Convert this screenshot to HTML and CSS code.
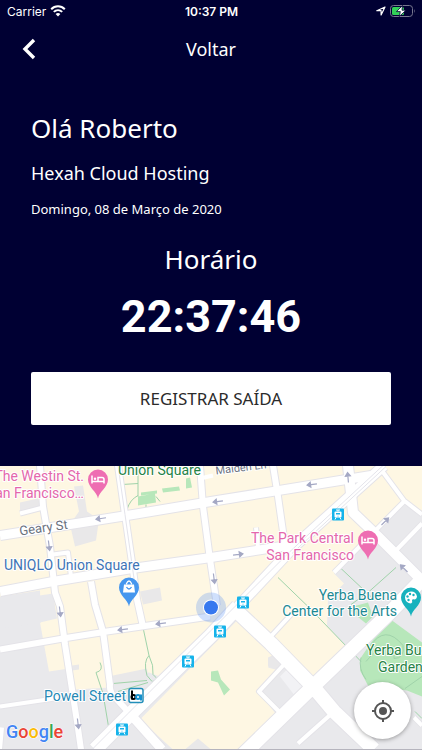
FILE: index.html
```html
<!DOCTYPE html>
<html lang="pt-BR">
<head>
  <meta charset="utf-8">
  <meta name="viewport" content="width=device-width, initial-scale=1">
  <title>Registrar ponto</title>
  <link rel="stylesheet" href="styles.css">
</head>
<body>
  <div class="status-bar">
    <div class="status-left">
      <span>Carrier</span>
      <svg width="16" height="12" viewBox="0 0 16 12" fill="none" stroke="#fff" stroke-width="2">
        <path d="M1.200 4.200C5 .3 11 .3 14.800 4.200M3.800 6.900C6.200 4.600 9.800 4.600 12.200 6.900"/>
        <path d="M8 11.500L5.600 9Q8 7 10.400 9Z" fill="#fff" stroke="none"/>
      </svg>
    </div>
    <span class="status-time">10:37 PM</span>
    <div class="status-right">
      <svg width="10" height="10" viewBox="0 0 10 10" fill="none" stroke="#fff" stroke-width="1.200" stroke-linejoin="round">
        <path d="M9 1L.8 4.700H5.100V9Z"/>
      </svg>
      <svg width="26" height="12" viewBox="0 0 26 12">
        <rect x=".5" y=".5" width="22" height="11" rx="3" fill="none" stroke="#77778f"/>
        <path d="M24 4Q25.500 6 24 8Z" fill="#77778f"/>
        <rect x="2" y="2" width="12" height="8" rx="1.500" fill="#32d158"/>
        <path d="M12.500 .5L6.500 6.600H10.300L9.300 11.500L16 5.200H12Z" fill="#fff" stroke="#000033" stroke-width=".8"/>
      </svg>
    </div>
  </div>

  <nav class="navbar">
    <button class="back" type="button" aria-label="Voltar">
      <svg width="14" height="22" viewBox="0 0 14 22" fill="none" stroke="#fff" stroke-width="3.400">
        <path d="M12 2L3 11L12 20"/>
      </svg>
    </button>
    <span class="navbar-title">Voltar</span>
  </nav>

  <main class="panel">
    <h1 class="greeting">Olá Roberto</h1>
    <p class="company">Hexah Cloud Hosting</p>
    <p class="date">Domingo, 08 de Março de 2020</p>
    <h2 class="clock-title">Horário</h2>
    <time class="clock">22:37:46</time>
    <button class="register" type="button">REGISTRAR SAÍDA</button>
  </main>

  <section class="map">
    <svg class="map-canvas" viewBox="0 0 422 284" preserveAspectRatio="xMidYMid slice">
      <defs>
        <path id="arrow" d="M-5 0H5M-5 0L-1.500 -2.500V2.500Z"/>
        <g id="tram">
          <rect x="-6" y="-6" width="12" height="12" rx="1" fill="#16b3ea"/>
          <path d="M-2 -4.500H2M0 -4.500V-3" stroke="#fff"/>
          <rect x="-3.500" y="-3" width="7" height="6" rx="1" fill="#fff"/>
          <path d="M-2 -1.500H2V0H-2ZM-.5 1.200H.5V2H-.5Z" fill="#16b3ea"/>
          <path d="M-2 3L-3 5M2 3L3 5" stroke="#fff"/>
        </g>
        <path id="pin" d="M0 19C-1 12 -10 8 -10 0A10 10 0 0 1 10 0C10 8 1 12 0 19Z"/>
        <g id="bed" fill="none" stroke="#fff" stroke-width="1.500">
          <path d="M-6 -4V4M-6 2H6M6 4V0Q6 -2 4 -2H0V2"/>
          <circle cx="-3" cy="-.8" r="1.200" fill="#fff" stroke="none"/>
        </g>
      </defs>

      <rect width="422" height="284" fill="#e9e9ec"/>

      <!-- commercial blocks -->
      <g fill="#fef7e3">
        <path d="M0 0H384L211 172L165 213L149 207L113 211L110 222L74 224L69 203L49 206L40 157L57 153L53 128L0 136Z"/>
        <path d="M384 0H422V47L404 35L372 68L334 108L344 118L328 134L327 160L346 181L313 213L241 148L294 80Z"/>
        <path d="M238 154L268 180L279 191L268 202L279 205L258 226L278 251L244 284H173L140 254Z"/>
      </g>
      <path d="M0 131L40 125L41 157L0 163Z" fill="#e9e9ec"/>

      <!-- buildings -->
      <g fill="#e9e8e9">
        <path d="M20 37L38 33L42 44L20 48ZM74 21L83 20L87 46L99 54L96 75L75 81L70 59L79 46ZM140 126L160 122L162 135L143 139Z"/>
        <path d="M72 200L79 199V204L72 205ZM113 210L147 203L148 214L114 220ZM185 284L198 273L211 284Z"/>
        <path d="M268 192L279 187L286 198L279 205L268 201Z"/>
      </g>
      <path d="M280 211L288 203L307 224L297 233Z" fill="#f2f2f5"/>

      <!-- parks -->
      <g fill="#b7e7ba">
        <path d="M138 31L155 28L156 37L138 40ZM141 27L157 25V28L141 30ZM162 23L179 21L180 25L163 27ZM186 13L190 12L192 22L186 23Z"/>
        <path d="M211 206L218 205L221 214L230 224L224 230L218 217L211 215Z"/>
        <path d="M353 141L368 137L373 151L366 158L350 145Z"/>
        <path d="M361 192L388 152L422 177V231L407 225L368 220L360 205Z"/>
      </g>
      <g fill="none" stroke="#a0d3aa">
        <path d="M138 0V31M138 30Q130 34 127 44M122 19L138 18M156 31L160 36M146 39V42"/>
        <path d="M278 112L308 141L361 196M341 103L374 134M396 102L368 127L351 139"/>
        <path d="M143 162L149 190Q143 196 147 210L152 216L164 212M149 190Q154 200 153 209L158 214"/>
        <path d="M100 197Q104 205 96 207L103 228L109 264L140 231M113 218L147 215M118 226L148 217"/>
        <path d="M361 192Q358 203 366 214M370 181Q385 158 403 180Q405 193 394 193V184M373 188L366 196M405 223L422 211M415 246L422 253"/>
      </g>

      <!-- streets: edge stroke first, white on top -->
      <g fill="none" stroke="#e4e3e8" stroke-linejoin="round">
        <g stroke-width="6">
          <path d="M20 48L43 42M53 89L68 87L71 111M256 62L258 82M381 4L404 35L422 49M334 107L404 36M394 87L422 58"/>
          <path d="M268 174L291 149M284 199L259 226L281 248M334 246L298 278M0 241L68 231M2 262L0 284M414 252L422 260"/>
        </g>
        <g stroke-width="8">
          <path d="M40 0L43 41L50 81L55 127L60 141L65 179L77 256L81 284M118 0L125 49L132 97L137 134L143 161M200 0L203 41L210 94L217 140M273 0L278 31L285 80"/>
          <path d="M91 116L95 139L103 166L110 219Q109 227 116 233L128 246M0 184L63 173L107 166L210 151"/>
        </g>
        <path d="M0 70L127 50L211 36L371 10M0 126L53 116L132 103L211 92L294 79M128 246L162 284" stroke-width="11"/>
        <path d="M348 0L353 47L378 71L422 115" stroke-width="12"/>
        <path d="M384 0L294 81L238 141" stroke-width="12"/>
        <path d="M238 141L211 170L133 246L95 284M236 145L271 178L313 221L334 246L374 284M241 291L313 221L391 146L422 114" stroke-width="16"/>
      </g>
      <g fill="none" stroke="#fff" stroke-linejoin="round">
        <g stroke-width="4">
          <path d="M20 48L43 42M53 89L68 87L71 111M256 62L258 82M381 4L404 35L422 49M334 107L404 36M394 87L422 58"/>
          <path d="M268 174L291 149M284 199L259 226L281 248M334 246L298 278M0 241L68 231M2 262L0 284M414 252L422 260"/>
        </g>
        <g stroke-width="6">
          <path d="M40 0L43 41L50 81L55 127L60 141L65 179L77 256L81 284M118 0L125 49L132 97L137 134L143 161M200 0L203 41L210 94L217 140M273 0L278 31L285 80"/>
          <path d="M91 116L95 139L103 166L110 219Q109 227 116 233L128 246M0 184L63 173L107 166L210 151"/>
        </g>
        <path d="M200 13L213 10" stroke-width="4"/>
        <path d="M0 70L127 50L211 36L371 10M0 126L53 116L132 103L211 92L294 79M128 246L162 284" stroke-width="9"/>
        <path d="M348 0L353 47L378 71L422 115" stroke-width="10"/>
        <path d="M384 0L294 81L238 141" stroke-width="10"/>
        <path d="M238 141L211 170L133 246L95 284M236 145L271 178L313 221L334 246L374 284M241 291L313 221L391 146L422 114" stroke-width="14"/>
      </g>
      <path d="M383 0L290 86L128 248L92 284M118 0L125 49L135 120M386 1L292 88" fill="none" stroke="#e4e4eb"/>

      <!-- one-way arrows -->
      <g fill="#a4a8c4" stroke="#a4a8c4" stroke-width="1.200">
        <use href="#arrow" transform="translate(101 53) rotate(-9)"/>
        <use href="#arrow" transform="translate(49 80) rotate(-97)"/>
        <use href="#arrow" transform="translate(218 36) rotate(-8)"/>
        <use href="#arrow" transform="translate(312 19) rotate(-8)"/>
        <use href="#arrow" transform="translate(348 12) rotate(85)"/>
        <use href="#arrow" transform="translate(238 89) rotate(172)"/>
        <use href="#arrow" transform="translate(214 113) rotate(-97)"/>
        <use href="#arrow" transform="translate(385 56) rotate(135)"/>
        <use href="#arrow" transform="translate(404 103) rotate(45)"/>
        <use href="#arrow" transform="translate(60 146) rotate(-97)"/>
        <use href="#arrow" transform="translate(123 164) rotate(-8)"/>
        <use href="#arrow" transform="translate(161 158) rotate(-8)"/>
        <use href="#arrow" transform="translate(78 258) rotate(-97)"/>
      </g>

      <!-- transit stops -->
      <use href="#tram" x="338" y="49"/>
      <use href="#tram" x="243" y="137"/>
      <use href="#tram" x="220" y="166"/>
      <use href="#tram" x="188" y="196"/>
      <use href="#tram" x="122" y="264"/>
      <rect x="129" y="223" width="14" height="14" rx="2" fill="#fff" stroke="#238fba" stroke-width="1.500"/>
      <g fill="none" stroke-width="2">
        <path d="M132 225V234" stroke="#000"/>
        <circle cx="133.500" cy="231.500" r="2" stroke="#000"/>
        <circle cx="138" cy="231.500" r="2" stroke="#168fcc"/>
        <path d="M141 229V235" stroke="#168fcc"/>
      </g>

      <!-- places -->
      <g fill="#ee6eb2">
        <use href="#pin" x="98" y="14"/>
        <use href="#pin" x="368" y="75"/>
      </g>
      <use href="#bed" x="98" y="14"/>
      <use href="#bed" x="368" y="75"/>
      <use href="#pin" x="129" y="122" fill="#4596ee"/>
      <path d="M124 119H134L135 127H123Z" fill="#fff"/>
      <path d="M126.500 119V118Q129 113 131.500 118V119" fill="none" stroke="#fff" stroke-width="1.300"/>
      <path d="M126.500 121.500Q129 125.500 131.500 121.500" fill="none" stroke="#4596ee" stroke-width="1.300"/>
      <use href="#pin" x="411" y="132" fill="#18b2bd"/>
      <path d="M411 126A6 6 0 1 0 411 138Q413 137 412 135Q412 133 415 134Q417 133 417 131Q416 126 411 126Z" fill="#fff"/>
      <g fill="#18b2bd">
        <circle cx="407.500" cy="131" r="1.200"/>
        <circle cx="410" cy="128.500" r="1.200"/>
        <circle cx="413.500" cy="129.500" r="1.200"/>
        <circle cx="408.500" cy="134.500" r="1.200"/>
      </g>

      <!-- current position -->
      <circle cx="211" cy="142" r="15" fill="#4285f4" fill-opacity=".25"/>
      <circle cx="211" cy="142" r="8" fill="#fff"/>
      <circle cx="211" cy="142" r="7" fill="#3678ef"/>

      <g class="label">
        <g class="hotel">
          <text x="84" y="15" text-anchor="end">The Westin St.</text>
          <text x="84" y="32" text-anchor="end">San Francisco…</text>
          <text x="354" y="77" text-anchor="end">The Park Central</text>
          <text x="354" y="94" text-anchor="end">San Francisco</text>
        </g>
        <g class="park">
          <text x="118" y="9">Union Square</text>
          <text x="366" y="189">Yerba Buena</text>
          <text x="378" y="206">Gardens</text>
        </g>
        <text class="shop" x="4" y="104">UNIQLO Union Square</text>
        <text class="arts" x="397" y="134" text-anchor="end">Yerba Buena</text>
        <text class="arts" x="397" y="150" text-anchor="end">Center for the Arts</text>
        <text class="station" x="126" y="235" text-anchor="end">Powell Street</text>
        <text class="street" transform="translate(20 70) rotate(-8)">Geary St</text>
        <text class="street small" transform="translate(216 9) rotate(-7)">Maiden Ln</text>
      </g>
      <text class="google" x="6" y="272"><tspan fill="#4285f4">G</tspan><tspan fill="#ea4335">o</tspan><tspan fill="#fbbc05">o</tspan><tspan fill="#4285f4">g</tspan><tspan fill="#34a853">l</tspan><tspan fill="#ea4335">e</tspan></text>
    </svg>

    <button class="locate" type="button" aria-label="Minha localização">
      <svg width="24" height="24" viewBox="0 0 24 24" fill="none" stroke="#555" stroke-width="2">
        <circle cx="12" cy="12" r="8"/>
        <circle cx="12" cy="12" r="4" fill="#555" stroke="none"/>
        <path d="M12 1V4M12 20V23M1 12H4M20 12H23"/>
      </svg>
    </button>
  </section>
</body>
</html>
```
FILE: styles.css
```css
* {
  box-sizing: border-box;
}

body {
  margin: 0;
  min-height: 100vh;
  display: flex;
  flex-direction: column;
  background-color: #000033;
  color: #fff;
  font-family: "Noto Sans", sans-serif;
}

button {
  border: 0;
  padding: 0;
  font-family: inherit;
  cursor: pointer;
}

svg {
  display: block;
}

.status-bar {
  height: 22px;
  padding: 0 6px 0 7px;
  display: grid;
  grid-template-columns: 1fr auto 1fr;
  align-items: center;
  font-family: Inter, sans-serif;
  font-size: 12px;
}

.status-left,
.status-right {
  display: flex;
  align-items: center;
  gap: 4px;
}

.status-right {
  justify-content: flex-end;
}

.status-time {
  font-weight: 600;
}

.navbar {
  height: 54px;
  padding: 0 22px;
  display: grid;
  grid-template-columns: 1fr auto 1fr;
  align-items: center;
}

.back {
  width: 14px;
  background: none;
}

.navbar-title {
  font-size: 18px;
}

.panel {
  padding: 34px 31px 41px;
  display: flex;
  flex-direction: column;
}

.greeting,
.company,
.date,
.clock-title {
  margin: 0;
  font-weight: 400;
}

.greeting,
.clock-title {
  font-size: 26px;
  line-height: 36px;
}

.company {
  margin-top: 15px;
  font-size: 18px;
  line-height: 24px;
}

.date {
  margin-top: 14px;
  font-size: 13px;
  line-height: 20px;
}

.clock-title {
  margin-top: 22px;
  text-align: center;
}

.clock {
  margin-top: 16px;
  font-family: Roboto, sans-serif;
  font-size: 45px;
  font-weight: 700;
  line-height: 48px;
  text-align: center;
}

.register {
  height: 53px;
  margin-top: 31px;
  border-radius: 2px;
  background-color: #fff;
  color: #2b2b2b;
  font-size: 17px;
}

.map {
  flex: 1;
  min-height: 284px;
  position: relative;
  overflow: hidden;
  border-bottom: 1px solid #b5b4bd;
}

.map-canvas {
  position: absolute;
  width: 100%;
  height: 100%;
}

.label {
  font-family: Roboto, sans-serif;
  font-size: 14px;
  paint-order: stroke;
  stroke: #fff;
  stroke-width: 2px;
  stroke-linejoin: round;
}

.hotel {
  fill: #e467ab;
}

.park {
  fill: #268345;
}

.shop {
  fill: #3e74b5;
}

.arts {
  fill: #1b8992;
}

.station {
  fill: #2588b5;
}

.street {
  fill: #6b7280;
  font-size: 13px;
}

.small {
  font-size: 11px;
}

.google {
  font-family: Roboto, sans-serif;
  font-size: 18px;
  font-weight: 500;
  paint-order: stroke;
  stroke: #fff;
  stroke-width: 1px;
}

.locate {
  position: absolute;
  right: 11px;
  bottom: 10px;
  width: 57px;
  height: 57px;
  display: grid;
  place-items: center;
  border-radius: 50%;
  background-color: #fff;
  box-shadow: 0 1px 4px rgba(0, 0, 0, 0.35);
}
```
